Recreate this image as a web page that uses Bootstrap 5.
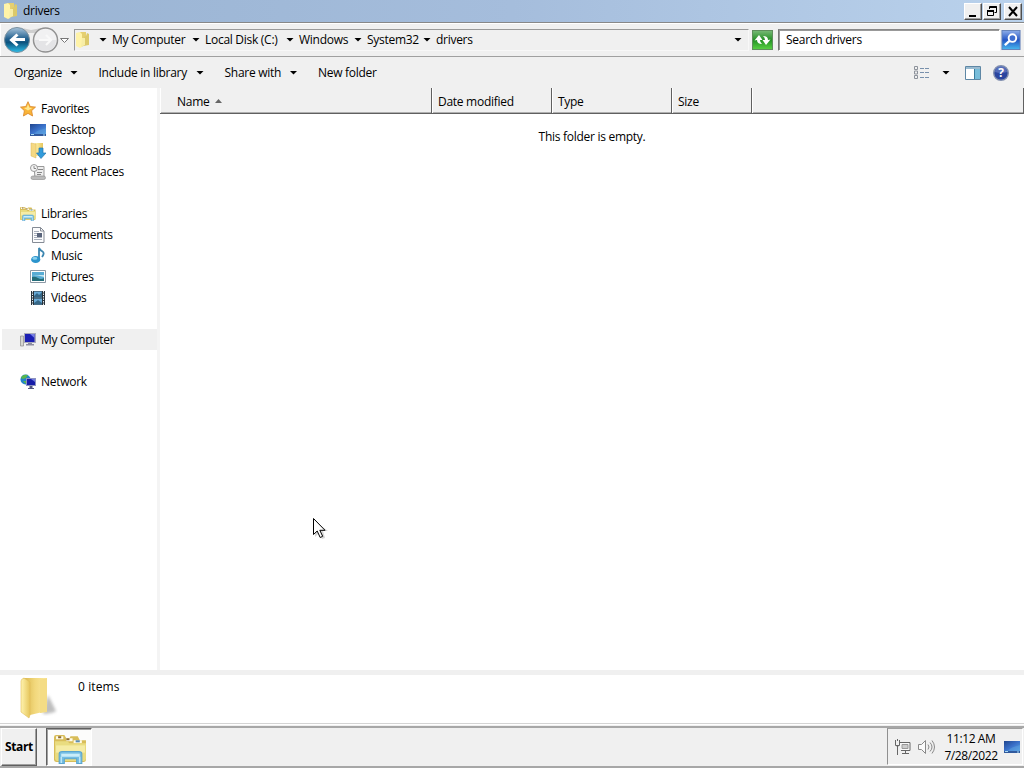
<!DOCTYPE html>
<html lang="en">
<head>
  <meta charset="UTF-8" />
  <meta name="viewport" content="width=device-width, initial-scale=1" />
  <title>drivers</title>
  <link href="https://cdn.jsdelivr.net/npm/bootstrap@5.3.0/dist/css/bootstrap.min.css" rel="stylesheet" />
  <style>
    body {
      font-family: "Open Sans", "Noto Sans", sans-serif;
      font-size: 12px;
      line-height: 16px;
      letter-spacing: -0.28px;
      color: #000;
      background: #f0f0f0;
      cursor: default;
    }
    svg { display: block; flex: none; }
    .caret { width: 8px; height: 4px; background: #000; clip-path: polygon(0 0, 100% 0, 50% 100%); flex: none; }

    .titlebar { height: 22px; padding: 0 2px 0 3px; background: linear-gradient(to right, #9ab4d3, #a5bddc 50%, #bad2ec); }
    .win-btn {
      width: 18px; height: 17px; padding: 0; border: 1px solid; border-radius: 0;
      border-color: #fff #505050 #505050 #fff;
      background: #f0f0f0; box-shadow: inset -1px -1px #a0a0a0;
    }
    .win-restore { margin-left: 1px; }
    .win-close { margin-left: 3px; }

    .navband { height: 35px; border-top: 1px solid #888; border-bottom: 1px solid #a0a0a0; box-shadow: inset 1px 1px #fff; padding: 0 2px 0 4px; }
    .address { width: 675px; height: 22px; border: 1px solid #f8f8f8; border-top-color: #999; border-left-color: #999; }
    .crumbs { display: grid; align-items: center; grid-template-columns: 24px 13px 80px 13px 81px 13px 55px 13px 56px 13px 298px 9px; }
    .refresh { margin-left: 3px; }
    .search-field { width: 222px; height: 22px; margin-left: 5px; border: 1px solid #fff; border-top-color: #888; border-left-color: #777; box-shadow: inset 1px 1px #999; background: #fff; padding: 2px 0 0 7px; }
    .search-go { margin-left: 1px; }

    .toolbar { height: 31px; padding: 0 15px 0 14px; }
    .tool { display: grid; align-items: center; }
    .tool-organize { grid-template-columns: 56px 28.5px; }
    .tool-library { grid-template-columns: 97.5px 28.5px; }
    .tool-share { grid-template-columns: 65px 28.5px; }
    .view-caret { margin: 0 15px 0 12px; }
    .help-icon { margin-left: 12px; }

    .sidebar { width: 157px; background: #fff; padding-top: 10px; }
    .tree-row { height: 21px; padding-left: 20px; gap: 5px; }
    .tree-row.sub { padding-left: 30px; }
    .tree-row.current { background: #f0f0f0; margin-left: 2px; padding-left: 18px; }
    .tree-gap { height: 21px; }
    .splitter { width: 3px; background: #f4f4f4; }

    .columns-head { height: 26px; border-bottom: 1px solid #606060; box-shadow: inset 0 -1px #b0b0b0; background: #f0f0f0; }
    .head-cell { border-left: 1px solid #fff; border-right: 1px solid #606060; padding: 3px 0 0 5px; height: 25px; }
    .head-name { width: 272px; padding-left: 16px; }
    .head-wide { width: 120px; }
    .head-size { width: 80px; }
    .sort-mark { margin: -2px 0 0 6px; }
    .empty-note { padding-top: 15px; }

    .details { height: 56px; border-top: 5px solid #f0f0f0; border-bottom: 1px solid #f0f0f0; box-shadow: inset 0 -1px #fff, inset 0 -2px #d4d4d4; background: #fff; }
    .items-count { padding-top: 4px; letter-spacing: 0.1px; }

    .taskbar { height: 42px; border-top: 2px solid #a7a7a7; border-bottom: 2px solid #a7a7a7; background: #f0f0f0; }
    .start { width: 36px; height: 38px; margin-left: 1px; padding: 0; border: 1px solid; border-radius: 0; border-color: #fff #606060 #606060 #fff; box-shadow: inset -1px -1px #a0a0a0; font-size: 12px; font-weight: 700; letter-spacing: -0.35px; background: #f0f0f0; color: #000; }
    .task-button { width: 46px; height: 38px; margin-left: 9px; padding: 2px 0 0 2px; border: 1px solid #fff; border-top-color: #606060; border-left-color: #606060; box-shadow: inset 1px 1px #a0a0a0; background: #fcfcfb; }
    .tray { width: 136px; height: 37px; margin-right: 1px; padding-left: 6px; border: 1px solid #fff; border-top-color: #a0a0a0; border-left-color: #909090; }
    .tray-sound { margin-left: 7px; }
    .clock { width: 58px; margin-left: 7px; line-height: 17px; letter-spacing: -0.4px; }
    .tray-desk { margin-left: 4px; }

    .pointer { position: absolute; left: 312px; top: 517px; }
  </style>
</head>
<body class="vh-100 overflow-hidden d-flex flex-column">

<!-- Shared icons -->
<svg width="0" height="0" class="position-absolute">
  <defs>
    <linearGradient id="gold" x1="0" x2="1"><stop offset="0" stop-color="#fff3ae" /><stop offset="1" stop-color="#e6c65c" /></linearGradient>
    <linearGradient id="goldBack" x1="0" x2="1"><stop offset="0" stop-color="#d9b64a" /><stop offset=".5" stop-color="#f2d87c" /><stop offset="1" stop-color="#fbe9a0" /></linearGradient>
    <linearGradient id="screen" x1="0" y1="0" x2="1" y2="1"><stop offset="0" stop-color="#20458d" /><stop offset=".5" stop-color="#3a70c9" /><stop offset="1" stop-color="#5ba5e2" /></linearGradient>
    <linearGradient id="glass" x1="0" y1="0" x2="0" y2="1"><stop offset="0" stop-color="#a9c5dc" /><stop offset=".45" stop-color="#23618f" /><stop offset=".6" stop-color="#0d547f" /><stop offset="1" stop-color="#2fc0ea" /></linearGradient>
    <linearGradient id="green" x1="0" y1="0" x2="0" y2="1"><stop offset="0" stop-color="#79b978" /><stop offset=".5" stop-color="#249025" /><stop offset="1" stop-color="#59d344" /></linearGradient>
    <linearGradient id="blue" x1="0" y1="0" x2="0" y2="1"><stop offset="0" stop-color="#8faee9" /><stop offset=".5" stop-color="#2355c5" /><stop offset="1" stop-color="#49b9ef" /></linearGradient>
    <symbol id="folder" viewBox="0 0 16 18">
      <path d="M5 1h6v13l-5 2z" fill="#e5cf70" />
      <path d="M1 2l4-1 2 2v13l-2 1-4-2z" fill="#fff3a8" />
      <path d="M9 6l2-1 1-3 2 1v11l-6 1z" fill="#dcc96a" />
      <path d="M7 7h3v7l-4 2z" fill="#f7eda6" />
    </symbol>
    <symbol id="desktop" viewBox="0 0 16 14">
      <path d="M0 1h16v10H0z" fill="url(#screen)" />
      <path d="M0 11h16v2H0z" fill="#315a9d" />
      <path d="M5 10c4-4 7-3 11-5v6H4z" fill="#5b9fe0" opacity=".5" />
      <path d="M1 11.500h3M13 12h2" stroke="#a9dbf5" />
    </symbol>
    <symbol id="libs" viewBox="0 0 32 30">
      <path d="M0 4q0-2 2-2h8l2 3h3l1-2h7l2 4h6v19q0 2-2 2H2q-2 0-2-2z" fill="#d8bd59" />
      <path d="M2 3h7v3H2zM12 5h6v3h-6zM19 7h8v3h-8z" fill="#fffbe8" />
      <path d="M4 3h3v2H4zM12 5h3v2h-3z" fill="#8a6930" /><path d="M21 7h4v2h-4z" fill="#5b8cb2" />
      <path d="M1 8h12l2 2h16v15q0 2-2 2H3q-2 0-2-2z" fill="#e9dc80" />
      <path d="M2 12h28v7H2z" fill="#f5eca6" />
      <path d="M5 29.500V20q0-2 3-2h16q3 0 3 2v9.500h-5V25H10v4.500z" fill="#74bde3" stroke="#5aa5cf" />
      <path d="M7 20h18v3H7z" fill="#c9edfa" /><path d="M7 23v6M25 23v6" stroke="#d8f4fc" />
    </symbol>
  </defs>
</svg>

<!-- Title bar -->
<div class="titlebar d-flex align-items-center">
  <svg width="16" height="18"><use href="#folder" /></svg>
  <span class="ms-1 flex-grow-1">drivers</span>
  <button class="win-btn" aria-label="Minimize"><svg width="16" height="15"><path d="M4 11h7v2H4z" /></svg></button>
  <button class="win-btn win-restore" aria-label="Restore"><svg width="16" height="15" fill="none" stroke="#000"><path d="M6 3h7M5.500 5V2.500h7v6h-2M6 3.500h7M3 6.500h7M3.500 6v5.500h6V6M3 7.500h7" /></svg></button>
  <button class="win-btn win-close" aria-label="Close"><svg width="16" height="15"><path d="M4 3l8 9M12 3l-8 9" stroke="#000" stroke-width="2" /></svg></button>
</div>

<!-- Navigation -->
<div class="navband d-flex align-items-center">
  <svg width="66" height="28" viewBox="4 26 66 28">
    <path d="M17 28q8 0 14 2 8-2 14-2v5H17z" fill="#cfcfcf" />
    <circle cx="17" cy="40" r="12.500" fill="url(#glass)" stroke="#79909f" />
    <path d="M25 39.500H12m5.500-5l-6 5.500 6 5.500" fill="none" stroke="#fff" stroke-width="3" />
    <circle cx="45.500" cy="40" r="12" fill="#f1f1f2" stroke="#929292" stroke-width="1.500" />
    <path d="M35 40h21q0 10-10.500 11T35 40z" fill="#e4e4e6" />
    <path d="M39 40h11m-4-5l5 5-5 5" fill="none" stroke="#f9f9f9" stroke-width="2" />
    <path d="M60.500 38.500h8l-4 4z" fill="#fff" stroke="#777" />
  </svg>
  <div class="address crumbs ms-1">
    <svg width="16" height="18"><use href="#folder" /></svg>
    <i class="caret"></i><span>My Computer</span>
    <i class="caret"></i><span class="text-nowrap">Local Disk (C:)</span>
    <i class="caret"></i><span>Windows</span>
    <i class="caret"></i><span>System32</span>
    <i class="caret"></i><span>drivers</span>
    <i class="caret"></i>
  </div>
  <svg class="refresh" width="21" height="20" viewBox="0 0 21 20">
    <rect x=".5" y=".5" width="20" height="19" fill="url(#green)" stroke="#5f8d5d" />
    <path d="M2.500 10.500L7 5l3.500 5H8q0 2.500 2 4-5 0-5-4z" fill="#fff" />
    <path d="M2.500 10.500L7 5l3.500 5H8q0 2.500 2 4-5 0-5-4z" fill="#fff" transform="rotate(180 10.500 10)" />
  </svg>
  <div class="search-field">Search drivers</div>
  <svg class="search-go" width="20" height="20" viewBox="0 0 20 21">
    <rect x=".5" y=".5" width="19" height="20" fill="url(#blue)" stroke="#6380b8" />
    <circle cx="11.500" cy="8.500" r="4" fill="#3f6ed0" stroke="#fff" stroke-width="2" />
    <path d="M8.500 11.500L3.500 16" stroke="#fff" stroke-width="2.500" />
  </svg>
</div>

<!-- Commands -->
<div class="toolbar d-flex align-items-center">
  <div class="tool tool-organize"><span>Organize</span><i class="caret"></i></div>
  <div class="tool tool-library"><span class="text-nowrap">Include in library</span><i class="caret"></i></div>
  <div class="tool tool-share"><span class="text-nowrap">Share with</span><i class="caret"></i></div>
  <span class="flex-grow-1">New folder</span>
  <svg width="16" height="14" viewBox="0 0 16 14" fill="none">
    <path d="M.5.500h3v3h-3zM.5 5h3v3h-3zM.5 9.500h3v3h-3z" stroke="#8d929b" />
    <path d="M6 2.500h10M6 6.500h10M6 11.500h10" stroke="#7890ac" stroke-dasharray="4 1" />
  </svg>
  <i class="caret view-caret"></i>
  <svg width="16" height="14" viewBox="0 0 16 14">
    <path d="M.5.500h15v13H.5z" fill="#fff" stroke="#5e87a5" />
    <path d="M1 1h14v2H1z" fill="#9abbd0" /><path d="M10 3h5v10h-5z" fill="#78bdda" /><path d="M9.500 3v10" stroke="#397d9e" />
  </svg>
  <svg width="16" height="16" viewBox="0 0 16 16" class="help-icon">
    <circle cx="8" cy="8" r="7.300" fill="#2b459f" stroke="#8290af" stroke-width="1.400" />
    <path d="M2 7a6 6 0 0 1 12 0q-6 2-12 0" fill="#7188cc" opacity=".6" />
    <text x="8" y="12.300" text-anchor="middle" font-size="12" font-weight="700" fill="#fff">?</text>
  </svg>
</div>

<div class="d-flex flex-grow-1">
  <!-- Tree -->
  <nav class="sidebar">
    <div class="tree-row d-flex align-items-center">
      <svg width="16" height="16" viewBox="0 0 16 16"><path d="M8 .7l2.200 4.800 5.300.6-3.900 3.600 1 5.300L8 12.400 3.400 15l1-5.300L.5 6.100l5.300-.6z" fill="#f9b438" stroke="#d98528" stroke-width=".8" /><path d="M8 3l1.400 3.700 3 .4L8 9.500 4 7l2.800-.4z" fill="#ffe992" /></svg>
      <span>Favorites</span>
    </div>
    <div class="tree-row sub d-flex align-items-center"><svg width="16" height="14"><use href="#desktop" /></svg><span>Desktop</span></div>
    <div class="tree-row sub d-flex align-items-center">
      <svg width="16" height="17" viewBox="0 0 16 17"><path d="M5 1h8v13H5z" fill="url(#gold)" /><path d="M1 1l5 1v14l-5-2z" fill="#f5d983" stroke="#d9b759" stroke-width=".5" /><path d="M9 6h4v5h3l-5 5.500L6.500 11H9z" fill="#319bdb" stroke="#2777ad" stroke-width=".7" /></svg>
      <span>Downloads</span>
    </div>
    <div class="tree-row sub d-flex align-items-center">
      <svg width="16" height="16" viewBox="0 0 16 16"><path d="M4 2.500h10V14H5z" fill="#eee" stroke="#999" /><circle cx="4" cy="4" r="3.500" fill="#f5f5f5" stroke="#9a9a9a" /><path d="M4 2v2.500h2M8 5.500h5M7 8.500h5M7 10.500h4" fill="none" stroke="#888" /><rect x="1" y="12" width="14.500" height="3.500" rx="1.700" fill="#bbb" stroke="#888" stroke-width=".6" /></svg>
      <span class="text-nowrap">Recent Places</span>
    </div>
    <div class="tree-gap"></div>
    <div class="tree-row d-flex align-items-center"><svg width="16" height="15"><use href="#libs" /></svg><span>Libraries</span></div>
    <div class="tree-row sub d-flex align-items-center">
      <svg width="16" height="16" viewBox="0 0 16 16"><path d="M2.500.500h8l3.500 3.500v11.500H2.500z" fill="#fcfcfd" stroke="#858b95" /><path d="M10.500.500V4H14" fill="none" stroke="#858b95" /><path d="M4 4.500h5M4 6.500h3M4 8.500h3M4 10.500h8M4 12.500h8" stroke="#a9b0bc" /><path d="M7 6h5v4H7z" fill="#59647b" /></svg>
      <span>Documents</span>
    </div>
    <div class="tree-row sub d-flex align-items-center">
      <svg width="16" height="17" viewBox="0 0 16 17"><path d="M9 12V1q1 2 3.500 3.500T12 10" fill="none" stroke="#3c86b0" stroke-width="1.800" /><ellipse cx="5.700" cy="12.500" rx="4.600" ry="3.600" fill="#2b94cc" /><ellipse cx="4.800" cy="11.400" rx="2.500" ry="1.300" fill="#8bd2ef" /></svg>
      <span>Music</span>
    </div>
    <div class="tree-row sub d-flex align-items-center">
      <svg width="16" height="13" viewBox="0 0 16 13"><path d="M.5.500h15v12H.5z" fill="#fff" stroke="#8c99a5" /><path d="M2 2h12v9H2z" fill="#58acd4" /><path d="M2 5q6 0 12 2V5H2" fill="#c3e5ef" /><path d="M2 7q3-1 6 1t6 0v3H2z" fill="#246d79" /></svg>
      <span>Pictures</span>
    </div>
    <div class="tree-row sub d-flex align-items-center">
      <svg width="16" height="16" viewBox="0 0 16 16"><path d="M1 1h14v14H1z" fill="#29333b" /><path d="M4 1.500h8v6H4zM4 8.500h8v6H4z" fill="#68aad6" /><path d="M4 6l3-3 2 2 3-3v5H4zM4 13l4-3 4 3v1H4z" fill="#356787" /><path d="M2.500 1v14M13.500 1v14" stroke="#e7edf1" stroke-dasharray="1.500 1" /></svg>
      <span>Videos</span>
    </div>
    <div class="tree-gap"></div>
    <div class="tree-row current d-flex align-items-center">
      <svg width="16" height="16" viewBox="0 0 16 16"><path d="M.5 4h3v10h-3z" fill="#d6d6d1" stroke="#898989" stroke-width=".7" /><path d="M4 1h12v10H4z" fill="#a9abbc" /><path d="M5 2h9.500v8H5z" fill="#1b1fb3" /><path d="M10 2h4.500v4z" fill="#7880e4" /><path d="M8 11h4v1h2v1.500H6V12h2z" fill="#8d8da0" /></svg>
      <span class="text-nowrap">My Computer</span>
    </div>
    <div class="tree-gap"></div>
    <div class="tree-row d-flex align-items-center">
      <svg width="16" height="16" viewBox="0 0 16 16"><circle cx="5.500" cy="5.500" r="5" fill="#2383ca" /><path d="M2 2q3-2 6-1L6 4 3 5 1 4zM3 7l4 0-1 3z" fill="#58b74d" /><path d="M6 4h10v8H6z" fill="#8d92c0" /><path d="M7 5h8v6H7z" fill="#171da8" /><path d="M11 5h4v3z" fill="#707be0" /><path d="M9.500 12h3v2h1.500v1H8v-1h1.500z" fill="#52577f" /></svg>
      <span>Network</span>
    </div>
  </nav>
  <div class="splitter"></div>

  <!-- File list -->
  <main class="flex-grow-1 bg-white">
    <div class="columns-head d-flex">
      <div class="head-cell head-name d-flex align-items-center">Name<svg class="sort-mark" width="7" height="4"><path d="M0 4l3.500-4L7 4z" fill="#666" /></svg></div>
      <div class="head-cell head-wide d-flex align-items-center">Date modified</div>
      <div class="head-cell head-wide d-flex align-items-center">Type</div>
      <div class="head-cell head-size d-flex align-items-center">Size</div>
      <div class="head-cell flex-grow-1"></div>
    </div>
    <div class="empty-note text-center">This folder is empty.</div>
  </main>
</div>

<!-- Details -->
<div class="details d-flex">
  <svg width="78" height="48" viewBox="0 675 78 48">
    <defs><filter id="soft"><feGaussianBlur stdDeviation="1.500" /></filter></defs>
    <path d="M43 713l5-18 8 16q-2 2-12 3z" fill="#888" opacity=".55" filter="url(#soft)" />
    <path d="M23 678h24v33l-17 4z" fill="url(#goldBack)" />
    <path d="M21 681q0-2 3-3l6 4v33l-1 3-8-6z" fill="url(#gold)" stroke="#e0bd5d" stroke-width=".6" />
    <path d="M40 680l7-2v34l-7 1z" fill="#f4dc84" />
  </svg>
  <div class="items-count">0 items</div>
</div>

<!-- Taskbar -->
<div class="taskbar d-flex">
  <button class="start">Start</button>
  <div class="task-button d-flex align-items-center justify-content-center"><svg width="33" height="31" viewBox="0 0 32 30"><use href="#libs" /></svg></div>
  <div class="tray ms-auto d-flex align-items-center">
    <svg width="17" height="16" viewBox="0 0 17 16" fill="none" stroke="#666">
      <path d="M6 3.500h10v8H7" fill="#fafafa" /><path d="M8 5.500h6v4H8z" fill="#ccc" stroke="#999" /><path d="M8 14.500h7M11.500 12v2M1.500 1v5.500h4V1M3.500 0v2M3.500 7v9M2.500 7h2" />
    </svg>
    <svg width="17" height="16" viewBox="0 0 17 16" fill="none" stroke="#888" class="tray-sound">
      <path d="M.5 5.500h3l4-4v13l-4-4h-3z" fill="#fafafa" /><path d="M10 5.500q2 2.500 0 5M12 3.500q4 4.500 0 9M14 1.500q5 6.500 0 13" />
    </svg>
    <div class="clock text-center">11:12 AM<br />7/28/2022</div>
    <svg width="16" height="14" class="tray-desk"><use href="#desktop" /></svg>
  </div>
</div>

<svg class="pointer" width="16" height="24" viewBox="0 0 16 24">
  <path d="M3 4v16l4-4 3 6 3-1-2-7h5z" fill="#777" opacity=".3" />
  <path d="M1.500 1.500v16l3.700-3.500 3 6.500 2.500-1.200-2.900-6H13z" fill="#fff" stroke="#000" />
</svg>

<script src="https://cdn.jsdelivr.net/npm/bootstrap@5.3.0/dist/js/bootstrap.bundle.min.js"></script>
</body>
</html>
